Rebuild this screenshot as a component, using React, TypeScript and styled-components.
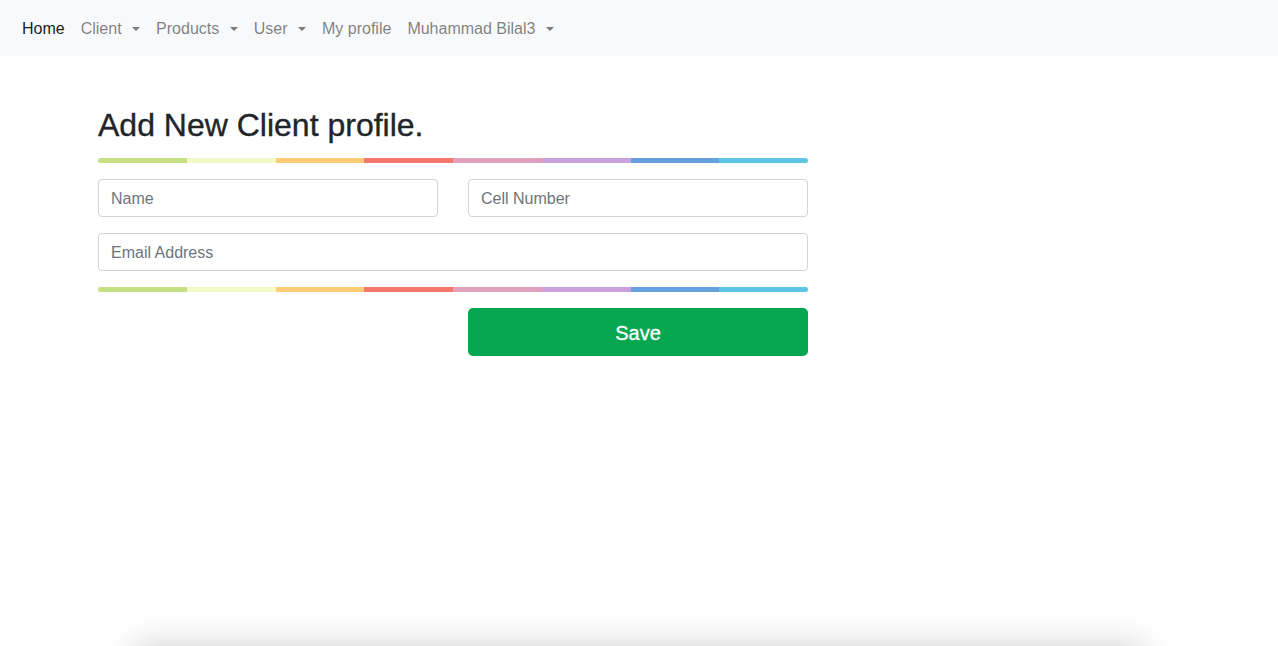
import React from "react";
import styled, { createGlobalStyle } from "styled-components";

const GlobalStyle = createGlobalStyle`
  html, body { margin: 0; padding: 0; background: #fff; }
  body {
    font-family: "Liberation Sans", Arial, sans-serif;
    color: #212529;
    -webkit-font-smoothing: antialiased;
  }
  * { box-sizing: border-box; }
`;

const Page = styled.div`
  height: 100vh;
  overflow: hidden;
`;

const Navbar = styled.nav`
  height: 56px;
  background: #f8f9fa;
  display: flex;
  align-items: center;
  padding: 0 14px;
`;

const NavLink = styled.a<{ $active?: boolean; $dropdown?: boolean }>`
  font-size: 16px;
  line-height: 24px;
  padding: 9px 8px 7px;
  color: ${(p) => (p.$active ? "rgba(0,0,0,0.9)" : "rgba(0,0,0,0.5)")};
  text-decoration: none;
  cursor: pointer;
  white-space: nowrap;
  display: inline-flex;
  align-items: center;

  ${(p) =>
    p.$dropdown &&
    `
    &::after {
      content: "";
      display: inline-block;
      margin-left: 10.5px;
      border-top: 4.8px solid currentColor;
      border-left: 4.4px solid transparent;
      border-right: 4.4px solid transparent;
    }
  `}
`;

const Main = styled.main`
  min-height: calc(100vh - 56px);
  padding: 50px 0 0 98px;
`;

const FormBox = styled.div`
  width: 710px;
`;

const Title = styled.h2`
  font-size: 32px;
  font-weight: 500;
  line-height: 1.2;
  margin: 0 0 14px;
  color: #212529;
  -webkit-text-stroke: 0.35px #212529;
`;

const Rainbow = styled.div`
  height: 5px;
  border-radius: 3px;
  background: linear-gradient(
    to right,
    #c5e085 0 12.5%,
    #f4f9c8 12.5% 25%,
    #fecc75 25% 37.5%,
    #f5776c 37.5% 50%,
    #e0a1bd 50% 62.5%,
    #c9a1db 62.5% 75%,
    #65a1df 75% 87.5%,
    #5cc6e4 87.5% 100%
  );
`;

const Fields = styled.div`
  display: grid;
  grid-template-columns: 1fr 1fr;
  column-gap: 30px;
  row-gap: 16px;
  margin: 16px 0;
`;

const Input = styled.input<{ $wide?: boolean }>`
  grid-column: ${(p) => (p.$wide ? "1 / -1" : "auto")};
  height: 38px;
  padding: 7px 12px 5px;
  font-family: inherit;
  font-size: 16px;
  color: #495057;
  border: 1px solid #ced4da;
  border-radius: 4px;
  background: #fff;
  outline: none;

  &::placeholder {
    color: #6c757d;
    opacity: 1;
  }
`;

const Actions = styled.div`
  display: grid;
  grid-template-columns: 1fr 1fr;
  column-gap: 30px;
  margin-top: 16px;
`;

const SaveButton = styled.button`
  grid-column: 2;
  height: 48px;
  padding: 2px 0 0;
  border: none;
  border-radius: 5px;
  background: #07a651;
  color: #fff;
  font-family: inherit;
  font-size: 20px;
  font-weight: 500;
  -webkit-text-stroke: 0.3px #fff;
  cursor: pointer;
`;

const ShadowCard = styled.div`
  height: 200px;
  margin: 0 135px;
  background: #fff;
  box-shadow: 0 0 32px rgba(0, 0, 0, 0.2);
`;

export default function App() {
  return (
    <>
      <GlobalStyle />
      <Page>
        <Navbar>
          <NavLink $active>Home</NavLink>
          <NavLink $dropdown>Client</NavLink>
          <NavLink $dropdown>Products</NavLink>
          <NavLink $dropdown>User</NavLink>
          <NavLink>My profile</NavLink>
          <NavLink $dropdown>Muhammad Bilal3</NavLink>
        </Navbar>
        <Main>
          <FormBox>
            <Title>Add New Client profile.</Title>
            <Rainbow />
            <Fields>
              <Input placeholder="Name" />
              <Input placeholder="Cell Number" />
              <Input $wide placeholder="Email Address" />
            </Fields>
            <Rainbow />
            <Actions>
              <SaveButton>Save</SaveButton>
            </Actions>
          </FormBox>
        </Main>
        <ShadowCard />
      </Page>
    </>
  );
}
